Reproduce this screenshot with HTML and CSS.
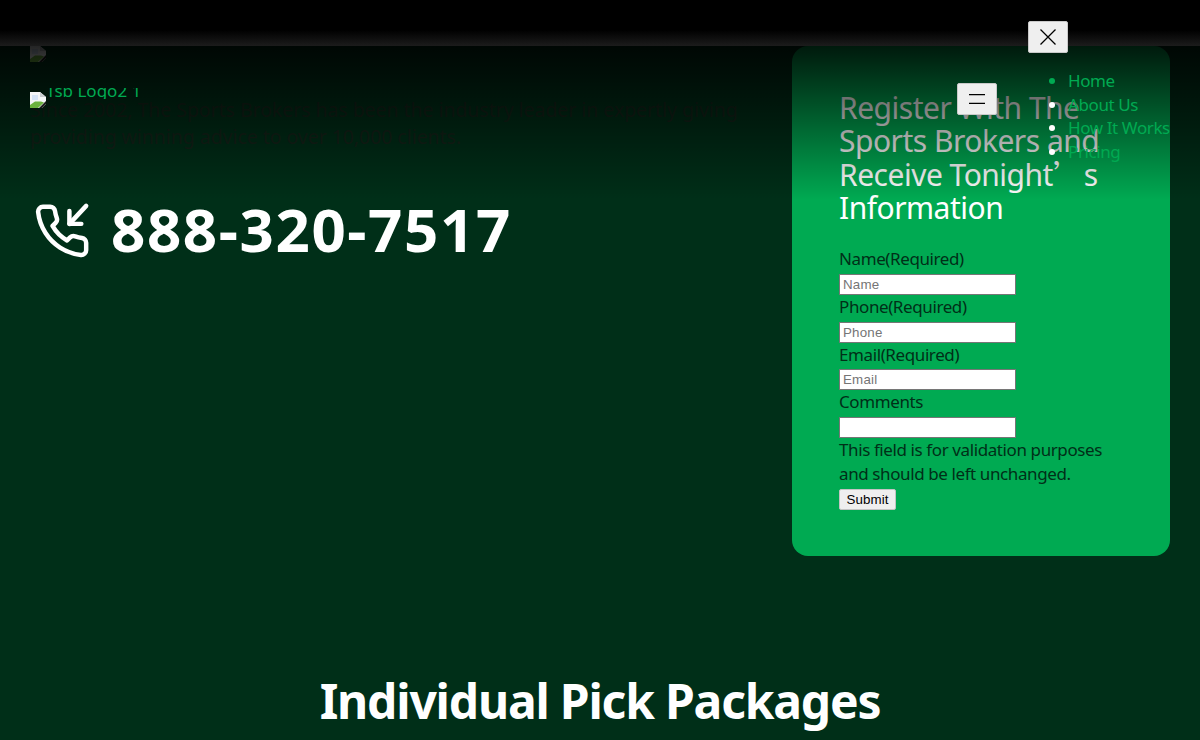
FILE: index.html
```html
<!DOCTYPE html>
<html lang="en">
<head>
<meta charset="utf-8">
<title>The Sports Brokers</title>
<link rel="stylesheet" href="styles.css">
</head>
<body>
<svg class="defs" width="0" height="0" aria-hidden="true">
  <symbol id="broken" viewBox="0 0 16 16">
    <path d="M0 0H10L16 5V12L12 16H0Z" fill="#f4f6f8"/>
    <path d="M10 0V5H16Z" fill="#c9ccd0"/>
    <path d="M2 3H8V8H2Z" fill="#d5e4f7"/>
    <path d="M0 16V13L5 9.500L11 9.500L14 10.500L8 16Z" fill="#6cb33f"/>
    <path d="M9 16L16 9V12L12 16Z" fill="#1c1c1c"/>
  </symbol>
</svg>
<header class="top-bar"></header>
<main class="page">
  <section class="hero">
    <div class="intro">
      <svg class="broken-icon"><use href="#broken"/></svg>
      <p class="lead">Since 2002, The Sports Brokers has been the industry leader in expertly giving providing winning advice to over 10,000 clients.</p>
      <a class="phone" href="#">
        <svg class="phone-icon" viewBox="0 0 24 24" fill="none" stroke="#fff" stroke-width="1.850" stroke-linecap="round" stroke-linejoin="round">
          <polyline points="15.060 3.700 15.060 9.050 20 9.050"/>
          <line x1="22" y1="1.600" x2="15.060" y2="9.050"/>
          <path d="M22 16.920v3a2 2 0 0 1-2.180 2 19.790 19.790 0 0 1-8.630-3.070 19.500 19.500 0 0 1-6-6 19.790 19.790 0 0 1-3.070-8.670A2 2 0 0 1 4.110 2h3a2 2 0 0 1 2 1.720 12.840 12.840 0 0 0 .7 2.810 2 2 0 0 1-.45 2.110L8.090 9.910a16 16 0 0 0 6 6l1.270-1.270a2 2 0 0 1 2.110-.45 12.840 12.840 0 0 0 2.810.7A2 2 0 0 1 22 16.920z"/>
        </svg>
        <span>888-320-7517</span>
      </a>
    </div>
    <aside class="panel">
      <h2 class="panel-title">Register With The Sports Brokers and Receive Tonight<span class="cjk">’</span> s Information</h2>
      <form class="form">
        <label class="field-label" for="f-name">Name(Required)</label>
        <input class="field" id="f-name" type="text" placeholder="Name">
        <label class="field-label" for="f-phone">Phone(Required)</label>
        <input class="field" id="f-phone" type="text" placeholder="Phone">
        <label class="field-label" for="f-email">Email(Required)</label>
        <input class="field" id="f-email" type="text" placeholder="Email">
        <label class="field-label" for="f-comments">Comments</label>
        <input class="field" id="f-comments" type="text">
        <p class="field-note">This field is for validation purposes and should be left unchanged.</p>
        <button class="submit" type="button">Submit</button>
      </form>
    </aside>
  </section>
  <h2 class="packages">Individual Pick Packages</h2>
</main>
<div class="fade"></div>
<a class="drawer-logo" href="#">
  <svg class="broken-icon"><use href="#broken"/></svg>
  <span class="alt">Tsb Logo2 1</span>
</a>
<button class="toggle toggle-close" type="button" aria-label="Close">
  <svg width="16" height="16" viewBox="0 0 16 16" stroke="#000" stroke-width="1.300" fill="none"><path d="M.5 .5 15.500 15.500M15.500 .5 .5 15.500"/></svg>
</button>
<button class="toggle toggle-menu" type="button" aria-label="Menu">
  <svg width="16" height="10" viewBox="0 0 16 10" stroke="#000" stroke-width="1.300" fill="none"><path d="M0 .7H16M0 9.300H16"/></svg>
</button>
<ul class="drawer-nav">
  <li class="current"><a href="#">Home</a></li>
  <li><a href="#">About Us</a></li>
  <li><a href="#">How It Works</a></li>
  <li><a href="#">Pricing</a></li>
</ul>
</body>
</html>
```

FILE: styles.css
```css
* { box-sizing: border-box; }
html, body { margin: 0; height: 740px; overflow: hidden; }
body {
  position: relative;
  background: #002f18;
  color: #002f18;
  font-family: "Noto Sans", "Open Sans", sans-serif;
  font-size: 17px;
  line-height: 24px;
  letter-spacing: -0.4px;
}
.defs { position: absolute; }
.top-bar {
  height: 46px;
  background: linear-gradient(to bottom, #000 0, #000 30px, #1c1c1c 46px);
}
.hero {
  display: grid;
  grid-template-columns: 1fr 378px;
  padding-right: 30px;
}
.intro { padding-left: 30px; min-width: 0; }
.broken-icon { display: block; width: 16px; height: 16px; flex: none; }
.lead {
  margin: 34px 0 0;
  width: 730px;
  font-size: 19.400px;
  line-height: 27px;
  letter-spacing: 0;
  color: #15241a;
}
.phone {
  display: flex;
  align-items: center;
  gap: 20px;
  margin-top: 39px;
  padding-left: 3px;
  color: #fff;
  text-decoration: none;
  font-size: 60px;
  font-weight: 700;
  line-height: 80px;
  letter-spacing: 1.600px;
}
.phone-icon { width: 58px; height: 58px; flex: none; margin-top: 3px; }
.panel {
  height: 510px;
  padding: 45px 47px 0;
  background: #00aa52;
  border-radius: 16px;
}
.panel-title {
  margin: 0 0 23px;
  font-size: 30px;
  font-weight: 400;
  line-height: 33.300px;
  letter-spacing: -0.5px;
  color: #fff;
}
.cjk { font-family: "Noto Sans CJK SC", sans-serif; line-height: 0; margin-right: -6px; }
.form { display: block; }
.field-label { display: block; }
.field {
  display: block;
  width: 177px;
  height: 21px;
  margin-top: 2.700px;
  padding: 1px 3px;
  border: 1px solid #767676;
  background: #fff;
  font-family: "Liberation Sans", sans-serif;
  font-size: 13.333px;
  letter-spacing: 0.2px;
}
.field-note { margin: 0; width: 280px; }
.submit {
  display: block;
  margin-top: 3px;
  width: 57px;
  height: 21px;
  padding: 0;
  border: 1px solid #c4c4c4;
  border-radius: 2px;
  background: #efefef;
  color: #000;
  font-family: "Liberation Sans", sans-serif;
  font-size: 13.333px;
  letter-spacing: 0.1px;
}
.packages {
  margin: 113px 0 0;
  text-align: center;
  color: #fff;
  font-size: 48px;
  font-weight: 700;
  line-height: 64px;
  letter-spacing: -1.200px;
}
.fade {
  position: absolute;
  left: 0;
  right: 0;
  top: 46px;
  height: 154px;
  background: linear-gradient(to bottom, rgba(0, 0, 0, 0.85), rgba(0, 0, 0, 0));
  pointer-events: none;
}
.drawer-logo {
  position: absolute;
  left: 30px;
  top: 92px;
  display: flex;
  align-items: flex-start;
  color: #00aa52;
  text-decoration: none;
  letter-spacing: 0;
}
.alt {
  display: block;
  margin-top: -4px;
  height: 11px;
  overflow: hidden;
  line-height: 6px;
  white-space: nowrap;
}
.toggle {
  position: absolute;
  display: flex;
  align-items: center;
  justify-content: center;
  width: 40px;
  height: 32px;
  padding: 0;
  border: 1px solid #c9c9c9;
  border-radius: 2px;
  background: #efefef;
}
.toggle-close { left: 1028px; top: 21px; }
.toggle-menu { left: 957px; top: 83px; }
.drawer-nav {
  position: absolute;
  left: 1028px;
  top: 69px;
  margin: 0;
  padding: 0 0 0 40px;
  color: #fff;
  line-height: 23.700px;
  white-space: nowrap;
}
.drawer-nav a { color: #00aa52; text-decoration: none; }
.drawer-nav .current { color: #00aa52; }
```
